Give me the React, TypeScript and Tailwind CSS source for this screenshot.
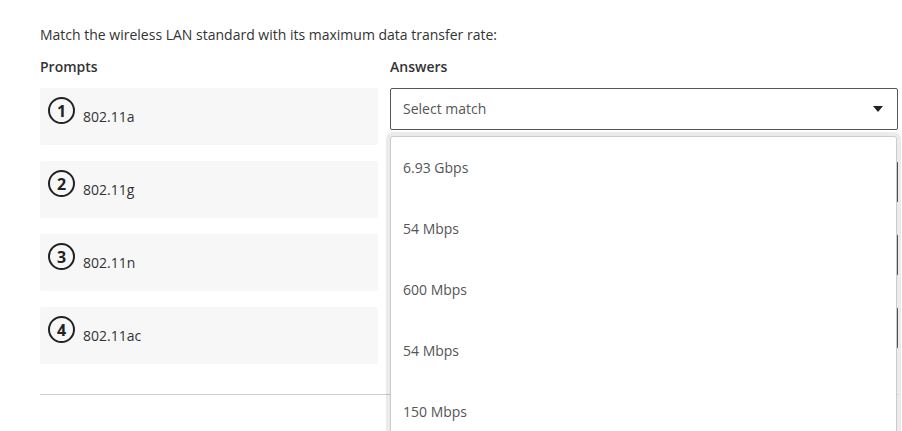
const prompts = [
  { n: 1, label: '802.11a' },
  { n: 2, label: '802.11g' },
  { n: 3, label: '802.11n' },
  { n: 4, label: '802.11ac' },
]

const options = ['6.93 Gbps', '54 Mbps', '600 Mbps', '54 Mbps', '150 Mbps']

function Caret() {
  return (
    <svg width="10" height="6" viewBox="0 0 10 6" className="shrink-0">
      <path d="M0 0h10L5 6z" fill="#222" />
    </svg>
  )
}

function SelectBox({ open }: { open?: boolean }) {
  return (
    <div className="relative">
      <div className="h-[42px] flex items-center justify-between border border-[#555] rounded-[2px] bg-white pl-3 pr-[14px]">
        <span className="text-sm text-[#555]">{open ? 'Select match' : ''}</span>
        <Caret />
      </div>
      {open && (
        <div className="absolute left-0 top-[48px] w-[507px] h-[300px] z-10 bg-white border border-[#ccc] rounded-[3px] ring-4 ring-black/[0.08]">
          {options.map((o, i) => (
            <div key={i} className="h-[61px] flex items-center pl-3 text-sm text-[#555]">
              {o}
            </div>
          ))}
        </div>
      )}
    </div>
  )
}

export default function App() {
  return (
    <div
      className="h-[431px] overflow-hidden bg-white pl-10 pr-1 pt-[25px] text-[#333]"
      style={{ fontFamily: '"Open Sans", "Liberation Sans", sans-serif' }}
    >
      <p className="text-sm leading-5">Match the wireless LAN standard with its maximum data transfer rate:</p>
      <div className="mt-3 flex gap-3 text-sm font-semibold leading-5">
        <div className="w-[338px]">Prompts</div>
        <div className="flex-1">Answers</div>
      </div>
      <div className="mt-[11px] flex flex-col gap-4">
        {prompts.map((p, i) => (
          <div key={p.n} className="flex gap-3 items-start">
            <div className="w-[338px] h-[57px] bg-[#f7f7f7] rounded-[2px] flex items-start pl-2 pt-[9px]">
              <div className="w-[27px] h-[27px] rounded-full border-2 border-[#222] flex items-center justify-center text-base font-bold leading-none text-[#222]">
                {p.n}
              </div>
              <span className="ml-2 mt-[10px] text-sm leading-5 text-[#333]">{p.label}</span>
            </div>
            <div className="w-[508px]">
              <SelectBox open={i === 0} />
            </div>
          </div>
        ))}
      </div>
      <div className="mt-[30px] border-t border-[#ccc]" />
    </div>
  )
}
